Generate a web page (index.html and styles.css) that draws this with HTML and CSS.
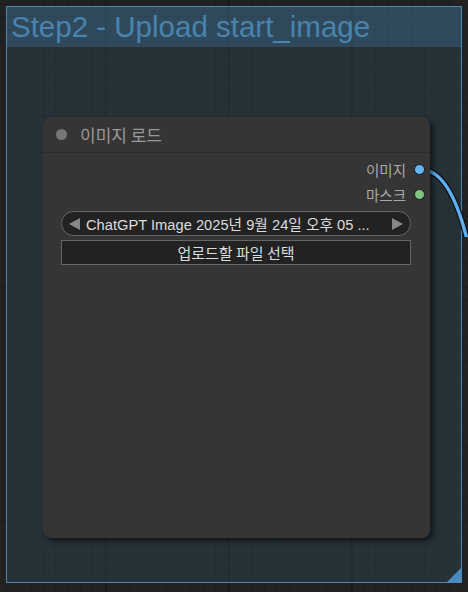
FILE: index.html
```html
<!DOCTYPE html>
<html>
<head>
<meta charset="utf-8">
<link rel="stylesheet" href="styles.css">
</head>
<body>
<div class="canvas">
  <div class="group">
    <div class="group-title">Step2 - Upload start_image</div>
    <div class="group-body"></div>
    <svg class="group-resize" width="14" height="14" viewBox="0 0 14 14"><polygon points="14,0 14,14 0,14" fill="#4a8bbd"/></svg>
  </div>

  <svg class="link" width="60" height="120" viewBox="0 0 60 120">
    <path d="M2,53 C22,54 38,82 50,140" fill="none" stroke="#111" stroke-width="6" stroke-linecap="round"/>
    <path d="M2,53 C22,54 38,82 50,140" fill="none" stroke="#5fb0f2" stroke-width="3.4"/>
  </svg>

  <div class="node">
    <div class="node-title">
      <span class="title-dot"></span>
      <span class="title-text">이미지 로드</span>
    </div>
    <div class="node-body">
      <div class="outputs">
        <div class="slot"><span class="slot-label">이미지</span><span class="slot-dot blue"></span></div>
        <div class="slot"><span class="slot-label">마스크</span><span class="slot-dot green"></span></div>
      </div>
      <div class="widgets">
        <div class="combo">
          <svg class="arrow" width="12" height="12" viewBox="0 0 12 12"><polygon points="11,0 11,12 0,6" fill="#888"/></svg>
          <span class="combo-text">ChatGPT Image 2025년 9월 24일 오후 05 ...</span>
          <svg class="arrow" width="12" height="12" viewBox="0 0 12 12"><polygon points="1,0 1,12 12,6" fill="#888"/></svg>
        </div>
        <div class="button">업로드할 파일 선택</div>
      </div>
    </div>
  </div>
</div>
</body>
</html>
```

FILE: styles.css
```css
html, body {
  margin: 0;
  padding: 0;
  background: #222;
}

.canvas {
  position: relative;
  width: 468px;
  height: 592px;
  overflow: hidden;
  background-color: #222;
  background-image:
    linear-gradient(90deg, rgba(0,0,0,0.2) 2px, transparent 2px),
    linear-gradient(90deg, rgba(0,0,0,0.16) 1px, transparent 1px),
    linear-gradient(0deg, rgba(0,0,0,0.16) 1px, transparent 1px);
  background-size: 123px 123px, 12.3px 12.3px, 12.3px 12.3px;
  background-position: 105px 0, 6px 0, 0 5px;
  font-family: "Liberation Sans", "Noto Sans CJK KR", Arial, sans-serif;
  padding: 6px;
  box-sizing: border-box;
}

.group {
  position: relative;
  width: 456px;
  height: 577px;
  border: 1.5px solid #4a88b8;
  box-sizing: border-box;
  display: flex;
  flex-direction: column;
}

.group-title {
  height: 40px;
  background: rgba(63, 120, 158, 0.47);
  color: #4784b0;
  font-size: 29.5px;
  line-height: 40px;
  padding-left: 4px;
  white-space: nowrap;
}

.group-body {
  flex: 1;
  background: rgba(63, 120, 158, 0.18);
}

.group-resize {
  position: absolute;
  right: 0;
  bottom: 0;
}

.link {
  position: absolute;
  left: 421px;
  top: 117px;
}

.node {
  position: absolute;
  left: 43px;
  top: 117px;
  width: 387px;
  height: 421px;
  background: #353535;
  border-radius: 8px;
  box-shadow: 3px 3px 5px rgba(0, 0, 0, 0.55);
  display: flex;
  flex-direction: column;
}

.node-title {
  height: 35px;
  border-bottom: 1px solid #2a2a2a;
  display: flex;
  align-items: center;
  padding-left: 13px;
  gap: 13px;
}

.title-dot {
  width: 11px;
  height: 11px;
  border-radius: 50%;
  background: #777;
}

.title-text {
  color: #999;
  font-size: 17px;
  font-family: "Noto Sans CJK KR", sans-serif;
}

.node-body {
  display: flex;
  flex-direction: column;
}

.outputs {
  display: flex;
  flex-direction: column;
  align-items: flex-end;
  padding-top: 4px;
  padding-right: 5px;
}

.slot {
  height: 25px;
  display: flex;
  align-items: center;
  gap: 8px;
}

.slot-label {
  color: #aaa;
  font-size: 14.5px;
  font-family: "Noto Sans CJK KR", sans-serif;
}

.slot-dot {
  width: 9px;
  height: 9px;
  border-radius: 50%;
  border: 1.5px solid #1a1a1a;
}

.slot-dot.blue { background: #64b5f6; }
.slot-dot.green { background: #7fc47f; }

.widgets {
  display: flex;
  flex-direction: column;
  gap: 4px;
  padding: 4px 19px 0 18px;
}

.combo {
  height: 25px;
  box-sizing: border-box;
  border: 1px solid #666;
  border-radius: 13px;
  background: #222;
  display: flex;
  align-items: center;
  padding: 0 7px 0 7px;
}

.combo .arrow { flex: none; }

.combo-text {
  flex: 1;
  color: #ddd;
  font-size: 14.7px;
  padding-left: 5px;
  white-space: nowrap;
}

.button {
  height: 25px;
  box-sizing: border-box;
  border: 1px solid #666;
  background: #222;
  color: #ddd;
  font-size: 15px;
  display: flex;
  align-items: center;
  justify-content: center;
  font-family: "Noto Sans CJK KR", sans-serif;
}
```
